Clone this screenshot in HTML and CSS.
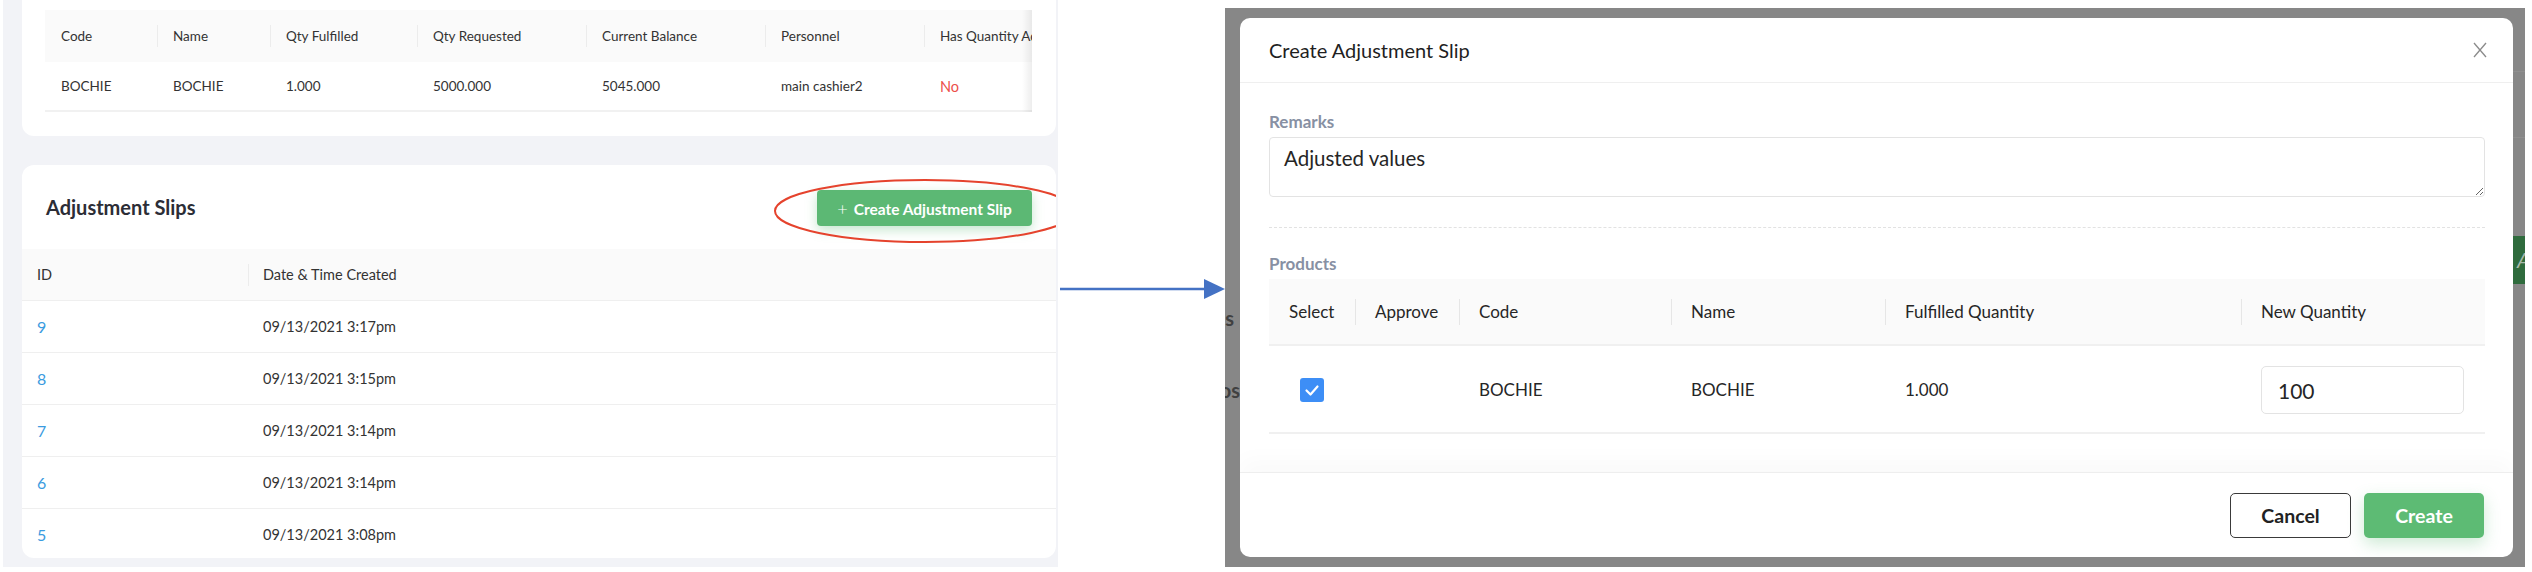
FILE: index.html
```html
<!DOCTYPE html>
<html lang="en">
<head>
<meta charset="utf-8">
<title>Create Adjustment Slip</title>
<link rel="stylesheet" href="styles.css">
</head>
<body>
<div class="stage">
  <section class="shot-left">
    <div class="card card-top">
      <div class="top-wrap">
        <div class="top-grid top-head">
          <div class="cell">Code</div>
          <div class="cell sep">Name</div>
          <div class="cell sep">Qty Fulfilled</div>
          <div class="cell sep">Qty Requested</div>
          <div class="cell sep">Current Balance</div>
          <div class="cell sep">Personnel</div>
          <div class="cell sep">Has Quantity Adjustment</div>
        </div>
        <div class="top-grid top-row">
          <div class="cell">BOCHIE</div>
          <div class="cell">BOCHIE</div>
          <div class="cell">1.000</div>
          <div class="cell">5000.000</div>
          <div class="cell">5045.000</div>
          <div class="cell">main cashier2</div>
          <div class="cell no">No</div>
        </div>
      </div>
    </div>

    <div class="card card-slips">
      <div class="slips-head">
        <h2 class="slips-title">Adjustment Slips</h2>
        <div class="btn-wrap">
          <button class="btn-green"><span class="plus">+</span>Create Adjustment Slip</button>
          <svg class="ring" viewBox="0 0 302 64" width="302" height="64">
            <ellipse cx="151" cy="32" rx="150" ry="31" fill="none" stroke="#e5432d" stroke-width="2"/>
          </svg>
        </div>
      </div>
      <div class="slips-grid slips-headrow">
        <div class="cell">ID</div>
        <div class="cell sep">Date &amp; Time Created</div>
      </div>
      <div class="slips-grid slips-row"><div class="cell id">9</div><div class="cell">09/13/2021 3:17pm</div></div>
      <div class="slips-grid slips-row"><div class="cell id">8</div><div class="cell">09/13/2021 3:15pm</div></div>
      <div class="slips-grid slips-row"><div class="cell id">7</div><div class="cell">09/13/2021 3:14pm</div></div>
      <div class="slips-grid slips-row"><div class="cell id">6</div><div class="cell">09/13/2021 3:14pm</div></div>
      <div class="slips-grid slips-row"><div class="cell id">5</div><div class="cell">09/13/2021 3:08pm</div></div>
    </div>
  </section>

  <div class="arrow">
    <svg viewBox="0 0 167 20" width="167" height="20">
      <line x1="2" y1="10" x2="150" y2="10" stroke="#4472c4" stroke-width="2.5"/>
      <polygon points="146,0 167,10 146,20" fill="#4472c4"/>
    </svg>
  </div>

  <section class="shot-right">
    <div class="under under-left">
      <div class="ghost ghost-1">s</div>
      <div class="ghost ghost-2">os</div>
    </div>

    <div class="modal">
      <div class="m-head">
        <div class="m-title">Create Adjustment Slip</div>
        <svg class="close" viewBox="0 0 14 16" width="14" height="16">
          <line x1="1" y1="1" x2="13" y2="15" stroke="#8a8a8a" stroke-width="1.3"/>
          <line x1="13" y1="1" x2="1" y2="15" stroke="#8a8a8a" stroke-width="1.3"/>
        </svg>
      </div>
      <div class="m-body">
        <div class="label label-remarks">Remarks</div>
        <textarea class="remarks">Adjusted values</textarea>
        <div class="dashed"></div>
        <div class="label label-products">Products</div>
        <div class="p-grid p-head">
          <div class="cell">Select</div>
          <div class="cell sep">Approve</div>
          <div class="cell sep">Code</div>
          <div class="cell sep">Name</div>
          <div class="cell sep">Fulfilled Quantity</div>
          <div class="cell sep">New Quantity</div>
        </div>
        <div class="p-grid p-row">
          <div class="cell check-cell">
            <span class="checkbox">
              <svg viewBox="0 0 24 24" width="24" height="24"><polyline points="6.5,12.5 10.5,16.5 17.5,8.5" fill="none" stroke="#fff" stroke-width="2.2" stroke-linecap="round" stroke-linejoin="round"/></svg>
            </span>
          </div>
          <div class="cell"></div>
          <div class="cell">BOCHIE</div>
          <div class="cell">BOCHIE</div>
          <div class="cell">1.000</div>
          <div class="cell"><input class="qty" type="text" value="100"></div>
        </div>
      </div>
      <div class="m-foot">
        <button class="btn-cancel">Cancel</button>
        <button class="btn-create">Create</button>
      </div>
    </div>

    <div class="under under-right">
      <div class="ghost-line l1"></div>
      <div class="ghost-line l2"></div>
      <div class="ghost-btn">A</div>
    </div>
  </section>
</div>
</body>
</html>
```

FILE: styles.css
```css
* { box-sizing: border-box; }

body {
  margin: 0;
  background: #ffffff;
  font-family: Lato, "Liberation Sans", sans-serif;
  color: #2a2a2a;
}

.stage {
  display: flex;
  align-items: flex-start;
  width: 2532px;
  height: 572px;
  overflow: hidden;
}

/* ---------- left screenshot ---------- */
.shot-left {
  flex: none;
  margin-left: 3px;
  width: 1055px;
  height: 567px;
  background: #f2f3f7;
  padding-left: 19px;
  overflow: hidden;
}

.card {
  width: 1034px;
  background: #ffffff;
}

.card-top {
  height: 136px;
  border-radius: 0 0 12px 12px;
  padding: 10px 24px 0 23px;
}

.top-wrap {
  position: relative;
  width: 987px;
  overflow: hidden;
}
.top-wrap::after {
  content: "";
  position: absolute;
  top: 0;
  right: 0;
  width: 10px;
  height: 102px;
  background: linear-gradient(to left, rgba(0,0,0,0.07), rgba(0,0,0,0));
}

.top-grid {
  display: grid;
  grid-template-columns: 112px 113px 147px 169px 179px 159px 170px;
  align-items: center;
  font-size: 13.5px;
  color: #333;
}
.top-head {
  height: 52px;
  background: #fafafa;
}
.top-row {
  height: 50px;
  border-bottom: 2px solid #f1f1f1;
}
.top-grid .cell {
  position: relative;
  padding-left: 16px;
  white-space: nowrap;
}
.top-grid .cell.sep::before,
.slips-grid .cell.sep::before,
.p-grid .cell.sep::before {
  content: "";
  position: absolute;
  left: 0;
  top: 50%;
  width: 1px;
  height: 22px;
  transform: translateY(-50%);
  background: #ececec;
}
.no { color: #ec4f4a; font-size: 14.5px; }

.card-slips {
  margin-top: 29px;
  height: 393px;
  border-radius: 12px;
  overflow: hidden;
}

.slips-head {
  height: 84px;
  display: flex;
  align-items: center;
  justify-content: space-between;
  padding: 0 24px;
}
.slips-title {
  margin: 0;
  font-size: 20px;
  font-weight: 700;
  color: #2c2d36;
}
.btn-wrap {
  position: relative;
  margin-top: 1px;
}
.btn-green {
  display: block;
  width: 215px;
  height: 36px;
  border: none;
  border-radius: 4px;
  background: #5cb874;
  color: #ffffff;
  font-family: Lato, "Liberation Sans", sans-serif;
  font-size: 15.5px;
  font-weight: 700;
  box-shadow: 0 4px 12px rgba(92, 184, 116, 0.35);
}
.plus {
  font-weight: 300;
  font-size: 18px;
  margin-right: 6px;
}
.ring {
  position: absolute;
  left: -43px;
  top: -11px;
  overflow: visible;
  pointer-events: none;
}

.slips-grid {
  display: grid;
  grid-template-columns: 226px 1fr;
  align-items: center;
  font-size: 14.5px;
  color: #333;
}
.slips-grid .cell {
  position: relative;
  padding-left: 15px;
}
.slips-headrow {
  height: 51px;
  background: #fafafa;
}
.slips-row {
  height: 52px;
  border-top: 1px solid #efefef;
}
.slips-grid .id {
  color: #3b9be0;
  font-size: 16px;
}

/* ---------- arrow ---------- */
.arrow {
  flex: none;
  width: 167px;
  padding-top: 279px;
}
.arrow svg { display: block; }

/* ---------- right screenshot ---------- */
.shot-right {
  flex: none;
  width: 1300px;
  height: 559px;
  margin-top: 8px;
  background: #878787;
  display: flex;
}

.under {
  flex: none;
  overflow: hidden;
}
.under-left {
  width: 15px;
  padding-top: 298px;
}
.ghost {
  display: flex;
  justify-content: flex-end;
  white-space: nowrap;
  font-size: 20px;
  font-weight: 700;
  color: #404040;
  line-height: 24px;
}
.ghost-1 { padding-right: 6px; }
.ghost-2 { margin-top: 48px; }

.under-right {
  width: 12px;
  padding-top: 63px;
}
.ghost-line {
  height: 1px;
  background: #8f8f8f;
}
.ghost-line.l2 { margin-top: 65px; }
.ghost-btn {
  margin-top: 98px;
  height: 48px;
  background: #2f6b3d;
  color: #a7b9ab;
  font-size: 22px;
  line-height: 48px;
  padding-left: 4px;
  font-style: italic;
}

.modal {
  flex: none;
  width: 1273px;
  height: 539px;
  margin-top: 10px;
  background: #ffffff;
  border-radius: 10px;
  display: flex;
  flex-direction: column;
  overflow: hidden;
}

.m-head {
  flex: none;
  height: 65px;
  display: flex;
  align-items: center;
  justify-content: space-between;
  padding: 0 26px 0 29px;
  border-bottom: 1px solid #efefef;
}
.m-title {
  font-size: 20px;
  color: #1f1f1f;
}
.close { display: block; }

.m-body {
  flex: 1;
  padding: 0 28px 0 29px;
}

.label {
  font-size: 17px;
  font-weight: 700;
  color: #8790a3;
  line-height: 20px;
}
.label-remarks { margin-top: 29px; }

.remarks {
  display: block;
  width: 100%;
  height: 60px;
  margin-top: 5px;
  padding: 9px 14px;
  border: 1px solid #e3e3e3;
  border-radius: 4px;
  font-family: Lato, "Liberation Sans", sans-serif;
  font-size: 20.5px;
  line-height: 22px;
  color: #262626;
  resize: vertical;
  background: #ffffff;
}

.dashed {
  margin-top: 30px;
  border-top: 1px dashed #e2e2e2;
}
.label-products { margin-top: 26px; }

.p-grid {
  display: grid;
  grid-template-columns: 86px 104px 212px 214px 356px 1fr;
  align-items: center;
  font-size: 17px;
  color: #262626;
}
.p-grid .cell {
  position: relative;
  padding-left: 20px;
}
.p-grid .cell.sep::before { height: 26px; background: #e6e6e6; }
.p-head {
  margin-top: 5px;
  height: 67px;
  background: #fafafa;
  border-bottom: 2px solid #f0f0f0;
}
.p-row {
  height: 88px;
  border-bottom: 2px solid #f0f0f0;
}
.p-grid .check-cell {
  padding-left: 0;
  display: flex;
  justify-content: center;
  padding-top: 2px;
}
.checkbox {
  display: block;
  width: 24px;
  height: 24px;
  border-radius: 3px;
  background: #3d8ef6;
}
.checkbox svg { display: block; }
.qty {
  display: block;
  width: 203px;
  height: 48px;
  padding: 0 0 0 16px;
  border: 1px solid #e3e3e3;
  border-radius: 5px;
  font-family: Lato, "Liberation Sans", sans-serif;
  font-size: 21px;
  color: #262626;
  margin-top: 2px;
}

.m-foot {
  flex: none;
  height: 85px;
  border-top: 1px solid #eeeeee;
  display: flex;
  justify-content: flex-end;
  align-items: center;
  gap: 13px;
  padding-right: 29px;
  box-shadow: 0 -12px 22px rgba(0, 0, 0, 0.025);
}
.btn-cancel,
.btn-create {
  height: 45px;
  border-radius: 5px;
  font-family: Lato, "Liberation Sans", sans-serif;
  font-size: 19.5px;
  font-weight: 700;
}
.btn-cancel {
  width: 121px;
  background: #ffffff;
  border: 1.5px solid #3a3a3a;
  color: #222;
}
.btn-create {
  width: 120px;
  background: #5dbb74;
  border: none;
  color: #ffffff;
  box-shadow: 0 6px 16px rgba(93, 187, 116, 0.3);
}
```
